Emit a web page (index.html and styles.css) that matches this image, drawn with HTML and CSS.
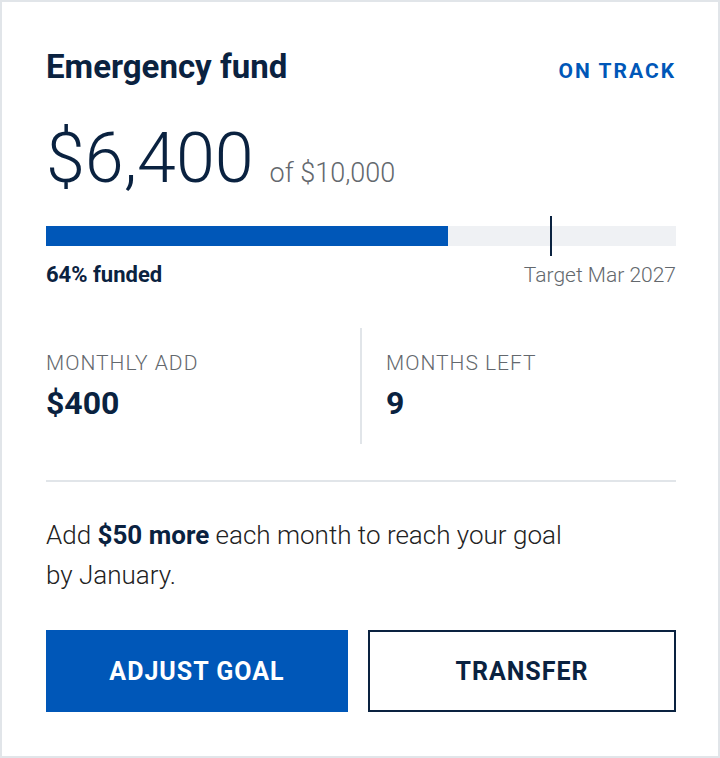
FILE: index.html
```
<!DOCTYPE html>
<html lang="en">
<head>
<meta charset="utf-8">
<meta name="viewport" content="width=device-width, initial-scale=1">
<title>Emergency fund</title>
<link rel="stylesheet" href="styles.css">
</head>
<body>
<main class="card">
  <header class="card-header">
    <h1 class="title">Emergency fund</h1>
    <span class="status">On track</span>
  </header>
  <p class="balance">
    <span class="amount">$6,400</span>
    <span class="goal">of $10,000</span>
  </p>
  <div class="progress" role="progressbar" aria-label="Funded" aria-valuenow="64" aria-valuemin="0" aria-valuemax="100">
    <div class="progress-fill" style="width: 63.8%"></div>
    <div class="progress-marker" style="left: 80%"></div>
  </div>
  <div class="progress-labels">
    <strong class="funded">64% funded</strong>
    <span class="target">Target Mar 2027</span>
  </div>
  <dl class="stats">
    <div class="stat">
      <dt class="stat-label">Monthly add</dt>
      <dd class="stat-value">$400</dd>
    </div>
    <div class="stat">
      <dt class="stat-label">Months left</dt>
      <dd class="stat-value">9</dd>
    </div>
  </dl>
  <p class="advice">Add <strong>$50 more</strong> each month to reach your goal<br>by January.</p>
  <div class="actions">
    <button type="button" class="button button-primary">Adjust goal</button>
    <button type="button" class="button button-outline">Transfer</button>
  </div>
</main>
</body>
</html>
```
FILE: styles.css
```
:root {
  --navy: #0a2240;
  --blue: #0057b8;
  --line: #e1e5e9;
  --track: #eff1f4;
  --muted: #63686d;
  --text: #222222;
}

* {
  box-sizing: border-box;
}

body,
h1,
p,
dl,
dd {
  margin: 0;
}

body {
  background: #ffffff;
  color: var(--text);
  font-family: Roboto, "Liberation Sans", sans-serif;
  font-size: 21px;
  font-weight: 300;
  line-height: 28px;
}

strong {
  color: var(--navy);
  font-weight: 700;
}

.card {
  padding: 44px 42px 44px 44px;
  border: 2px solid var(--line);
}

.card-header {
  display: flex;
  justify-content: space-between;
  align-items: baseline;
}

.title {
  color: var(--navy);
  font-size: 33px;
  font-weight: 700;
  line-height: 42px;
}

.status {
  color: var(--blue);
  font-weight: 700;
  letter-spacing: 2px;
  text-transform: uppercase;
}

.balance {
  display: flex;
  align-items: baseline;
  gap: 16px;
  margin-top: 34px;
}

.amount {
  color: var(--navy);
  font-size: 70px;
  line-height: 72px;
}

.goal {
  color: var(--muted);
  font-size: 27px;
}

.progress {
  position: relative;
  height: 20px;
  margin-top: 32px;
  background: var(--track);
}

.progress-fill {
  height: 100%;
  background: var(--blue);
}

.progress-marker {
  position: absolute;
  top: -10px;
  bottom: -10px;
  width: 2px;
  background: var(--navy);
}

.progress-labels {
  display: flex;
  justify-content: space-between;
  align-items: baseline;
  margin-top: 15px;
}

.funded {
  font-size: 22px;
}

.target,
.stat-label {
  color: var(--muted);
}

.stats {
  display: flex;
  margin-top: 39px;
}

.stat {
  flex: 1 1 0;
  padding: 21px 24px 20px 0;
}

.stat + .stat {
  padding: 21px 0 20px 24px;
  border-left: 2px solid var(--line);
}

.stat-label {
  letter-spacing: 1px;
  text-transform: uppercase;
}

.stat-value {
  margin-top: 5px;
  color: var(--navy);
  font-size: 32px;
  font-weight: 700;
  line-height: 42px;
}

.advice {
  margin-top: 36px;
  padding-top: 33px;
  border-top: 2px solid var(--line);
  font-size: 26px;
  line-height: 40px;
}

.actions {
  display: grid;
  grid-template-columns: 302fr 308fr;
  gap: 20px;
  margin-top: 35px;
}

.button {
  min-height: 82px;
  padding: 16px;
  border: 2px solid var(--navy);
  border-radius: 0;
  background: #ffffff;
  color: var(--navy);
  font-family: inherit;
  font-size: 25px;
  font-weight: 700;
  letter-spacing: 1px;
  text-transform: uppercase;
  cursor: pointer;
}

.button-primary {
  border-color: var(--blue);
  background: var(--blue);
  color: #ffffff;
}
```
